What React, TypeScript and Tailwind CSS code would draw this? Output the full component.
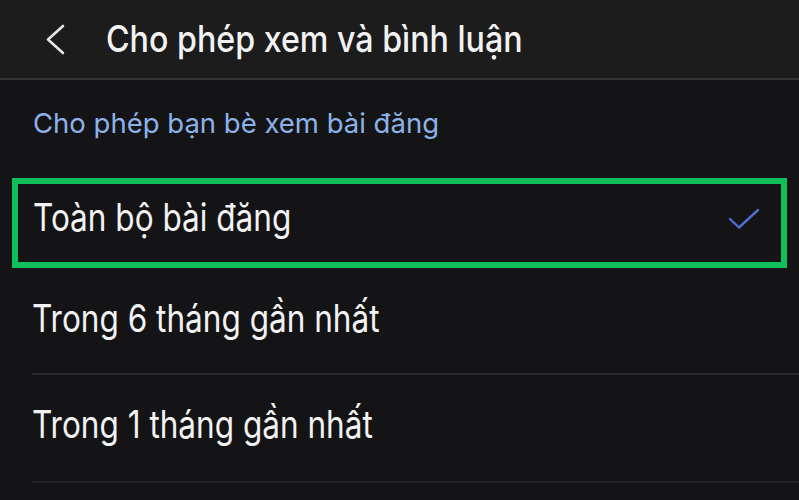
import React from "react";

export default function App() {
  const font = { fontFamily: '"Inter", "Liberation Sans", sans-serif' };
  const item = "text-[38px] leading-none text-[#f2f2f2] scale-x-[0.83] origin-left whitespace-nowrap";
  return (
    <div className="w-[799px] h-[500px] overflow-hidden bg-[#141416] text-white" style={font}>
      <div className="h-[80px] bg-[#1c1c1d] flex items-center border-b-2 border-[#343436]">
        <div className="w-[106px] flex items-center pl-[44px]">
          <svg width="22" height="31" viewBox="0 0 22 31" fill="none">
            <path d="M19 2 L4 15.5 L19 29" stroke="#e6e6e6" strokeWidth="2.6" strokeLinecap="round" strokeLinejoin="round" />
          </svg>
        </div>
        <div className="text-[37px] font-medium leading-none text-[#f2f2f2] scale-x-[0.87] origin-left whitespace-nowrap pb-[2px]">Cho phép xem và bình luận</div>
      </div>
      <div className="pt-[30px] pl-[33px] h-[98px] text-[27.5px] text-[#8db2ea] leading-none whitespace-nowrap">Cho phép bạn bè xem bài đăng</div>
      <div className="mx-[12px] h-[90px] border-[6px] border-[#0fbf5a] flex items-center justify-between pl-[15px] pr-[21px]">
        <span className={item + " pb-[12px]"}>Toàn bộ bài đăng</span>
        <svg className="mb-[8px]" width="32" height="22" viewBox="0 0 32 22" fill="none">
          <path d="M2 11 L11 19.5 L30 2" stroke="#4a6fcf" strokeWidth="2.4" strokeLinecap="round" strokeLinejoin="round" />
        </svg>
      </div>
      <div className="ml-[32px] h-[107px] flex items-center border-b-2 border-[#27272a]">
        <span className={item + " pb-[6px]"}>Trong 6 tháng gần nhất</span>
      </div>
      <div className="ml-[32px] h-[108px] flex items-center border-b-2 border-[#232326]">
        <span className={item + " pb-[8px]"}>Trong 1 tháng gần nhất</span>
      </div>
    </div>
  );
}
